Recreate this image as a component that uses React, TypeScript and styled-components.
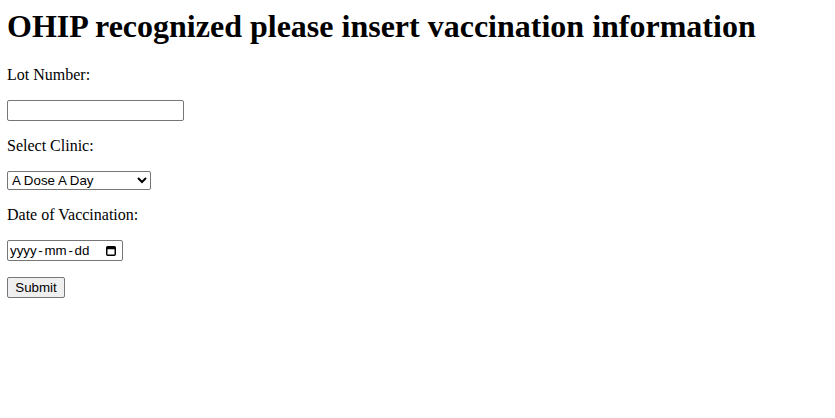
import React from "react";
import styled, { createGlobalStyle } from "styled-components";

const Global = createGlobalStyle`
  html, body { background: #fff; }
  body {
    margin: 8px 7px;
    font-family: "Liberation Serif", "Times New Roman", serif;
    font-size: 16px;
    color: #000;
  }
`;

const Title = styled.h1`
  margin: 0 0 21.44px 0;
  font-size: 32px;
  font-weight: bold;
  line-height: 37px;
`;

const Form = styled.form`
  display: flex;
  flex-direction: column;
  align-items: flex-start;
  gap: 16px;
`;

const Label = styled.label`
  display: block;
  line-height: 18px;
`;

const TextInput = styled.input`
  font-family: "Liberation Sans", Arial, sans-serif;
  font-size: 13.33px;
  width: 177px;
  height: 21px;
  box-sizing: border-box;
  margin: 0;
  padding: 1px 2px;
  border: 1px solid #767676;
  border-radius: 2px;
`;

const Select = styled.select`
  font-family: "Liberation Sans", Arial, sans-serif;
  font-size: 13.33px;
  width: 144px;
  height: 19px;
  box-sizing: border-box;
  margin: 0;
  border: 1px solid #767676;
  border-radius: 2px;
  background: #fff;
  color: #000;
`;

const DateField = styled.div`
  display: flex;
  align-items: center;
  width: 116px;
  height: 21px;
  box-sizing: border-box;
  border: 1px solid #767676;
  border-radius: 2px;
  padding: 0 6px 0 2px;
  background: #fff;
`;

const DateText = styled.input`
  flex: 1;
  min-width: 0;
  border: none;
  outline: none;
  padding: 0;
  margin: 0;
  font-family: "Liberation Sans", Arial, sans-serif;
  font-size: 13.33px;
  word-spacing: -2px;
  color: #000;
  background: transparent;
  &::placeholder { color: #000; opacity: 1; }
`;

const CalendarIcon = styled.svg`
  flex: none;
  width: 10px;
  height: 11px;
`;

const Button = styled.button`
  font-family: "Liberation Sans", Arial, sans-serif;
  font-size: 13.33px;
  height: 21px;
  width: 58px;
  box-sizing: border-box;
  margin: 0;
  padding: 1px 6px;
  border: 1px solid #767676;
  border-radius: 2px;
  background: #efefef;
  color: #000;
`;

export default function App() {
  return (
    <>
      <Global />
      <Title>OHIP recognized please insert vaccination information</Title>
      <Form onSubmit={(e) => e.preventDefault()}>
        <Label htmlFor="lot">Lot Number:</Label>
        <TextInput id="lot" type="text" />
        <Label htmlFor="clinic">Select Clinic:</Label>
        <Select id="clinic" defaultValue="A Dose A Day">
          <option>A Dose A Day</option>
          <option>Shoppers Drug Mart Pharmacy</option>
          <option>Rexall Pharmacy</option>
        </Select>
        <Label htmlFor="date">Date of Vaccination:</Label>
        <DateField>
          <DateText id="date" type="text" placeholder="yyyy - mm - dd" />
          <CalendarIcon viewBox="0 0 10 11" aria-hidden="true">
            <rect x="0.75" y="1.75" width="8.5" height="8.5" rx="1" fill="none" stroke="#000" strokeWidth="1.5" />
            <rect x="0.75" y="1.75" width="8.5" height="2.5" fill="#000" />
          </CalendarIcon>
        </DateField>
        <Button type="submit">Submit</Button>
      </Form>
    </>
  );
}
